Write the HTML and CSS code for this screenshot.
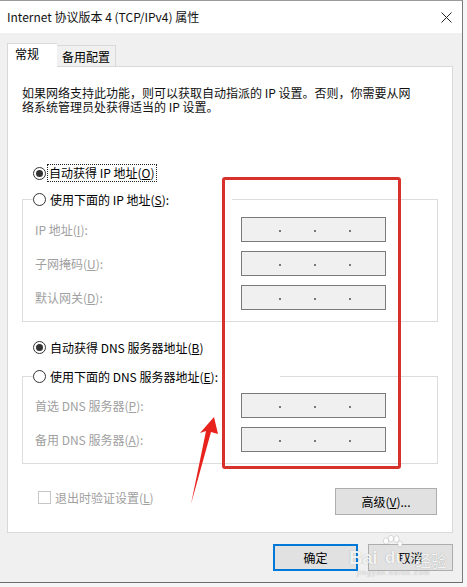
FILE: index.html
```html
<!DOCTYPE html>
<html lang="zh-CN">
<head>
  <meta charset="UTF-8">
  <title>Internet 协议版本 4 (TCP/IPv4) 属性</title>
  <link rel="stylesheet" href="styles.css">
</head>
<body>
  <div class="window">
    <div class="titlebar">
      <span class="title">Internet 协议版本 4 (TCP/IPv4) 属性</span>
      <svg class="close" width="11" height="11" viewBox="0 0 11 11"><path d="M0.5 0.5L10.5 10.5M10.5 0.5L0.5 10.5" stroke="#222" stroke-width="1" fill="none"/></svg>
    </div>

    <div class="content">
      <div class="tabs">
        <div class="tab active">常规</div>
        <div class="tab">备用配置</div>
      </div>

      <div class="panel">
        <p class="desc">如果网络支持此功能，则可以获取自动指派的 IP 设置。否则，你需要从网<br>络系统管理员处获得适当的 IP 设置。</p>

        <div class="radio-row mt-ip">
          <span class="radio checked"></span><span class="focus">自动获得 IP 地址(<u>O</u>)</span>
        </div>
        <fieldset class="group group-ip">
          <legend class="legend-ip"><span class="radio"></span><span>使用下面的 IP 地址(<u>S</u>):</span></legend>
          <div class="fields">
            <label class="lbl">IP 地址(<u>I</u>):</label>
            <div class="ipbox"><i></i><i></i><i></i></div>
            <label class="lbl">子网掩码(<u>U</u>):</label>
            <div class="ipbox"><i></i><i></i><i></i></div>
            <label class="lbl">默认网关(<u>D</u>):</label>
            <div class="ipbox"><i></i><i></i><i></i></div>
          </div>
        </fieldset>

        <div class="radio-row mt-dns">
          <span class="radio checked"></span><span>自动获得 DNS 服务器地址(<u>B</u>)</span>
        </div>
        <fieldset class="group group-dns">
          <legend class="legend-dns"><span class="radio"></span><span>使用下面的 DNS 服务器地址(<u>E</u>):</span></legend>
          <div class="fields">
            <label class="lbl">首选 DNS 服务器(<u>P</u>):</label>
            <div class="ipbox"><i></i><i></i><i></i></div>
            <label class="lbl">备用 DNS 服务器(<u>A</u>):</label>
            <div class="ipbox"><i></i><i></i><i></i></div>
          </div>
        </fieldset>

        <div class="panel-foot">
          <label class="check"><span class="box"></span><span>退出时验证设置(<u>L</u>)</span></label>
          <button class="btn adv">高级(<u>V</u>)...</button>
        </div>
      </div>

      <div class="actions">
        <button class="btn primary">确定</button>
        <button class="btn">取消</button>
      </div>
    </div>

    <!-- annotation drawn over the dialog -->
    <div class="redbox"></div>
    <svg class="arrow" width="40" height="100" viewBox="185 410 40 100">
      <polygon points="214,417 218,434 211,432 191,504 206,431 200,433" fill="#e8231e"/>
    </svg>

    <div class="watermark">
      <span class="wm-bai">Bai</span>
      <svg class="wm-paw" width="22" height="20" viewBox="0 0 22 20">
        <ellipse cx="5" cy="6" rx="2.6" ry="3.2" fill="rgba(255,255,255,.85)" stroke="rgba(0,0,0,.12)"/>
        <ellipse cx="10" cy="3.5" rx="2.6" ry="3.2" fill="rgba(255,255,255,.85)" stroke="rgba(0,0,0,.12)"/>
        <ellipse cx="15.5" cy="4" rx="2.6" ry="3.2" fill="rgba(255,255,255,.85)" stroke="rgba(0,0,0,.12)"/>
        <ellipse cx="19" cy="9" rx="2.4" ry="3" fill="rgba(255,255,255,.85)" stroke="rgba(0,0,0,.12)"/>
      </svg>
      <span class="wm-du">du</span>
      <span class="wm-jy">经验</span>
      <span class="wm-url">jingyan.baidu.com</span>
    </div>
  </div>
</body>
</html>
```

FILE: styles.css
```css
*{margin:0;padding:0;box-sizing:border-box;}
body{background:#f6f6f6;font-family:"Noto Sans CJK SC","Noto Sans",sans-serif;font-size:12px;color:#000;}

.window{position:relative;width:463px;height:583px;background:#f0f0f0;border-top:1px solid #9a9a9a;border-right:1px solid #7a7a7a;border-bottom:1px solid #6e6e6e;}
.titlebar{height:32px;background:#fff;display:flex;align-items:center;justify-content:space-between;padding:0 10px 0 7px;}
.title{font-size:12px;line-height:14px;color:#111;}
.close{display:block;}

.content{padding:10px 9px 0 7px;}
.tabs{display:flex;align-items:flex-end;height:23px;position:relative;z-index:1;}
.tab{height:21px;padding:0 5px;border:1px solid #d9d9d9;border-left:none;border-bottom:none;background:#f0f0f0;line-height:21px;font-size:12px;}
.tab.active{height:24px;width:50px;margin-bottom:-1px;padding:0 0 0 7px;border-left:1px solid #d9d9d9;border-right:none;background:#fff;line-height:19px;}

.panel{height:467px;background:#fff;border:1px solid #d9d9d9;padding:19px 14px 0 14px;}
.desc{line-height:14px;color:#111;}

.radio-row{display:flex;align-items:center;height:18px;padding-left:11px;gap:4px;}
.mt-ip{margin-top:50px;}
.mt-dns{margin-top:16px;}
.radio{display:inline-block;width:13px;height:13px;border:1px solid #333;border-radius:50%;background:#fff;position:relative;flex:none;}
.radio.checked::after{content:"";position:absolute;left:2px;top:2px;width:7px;height:7px;border-radius:50%;background:#333;}
.focus{outline:1px dotted #222;outline-offset:0;padding:0 1px;line-height:16px;margin-left:-2px;}

.group{border:1px solid #dcdcdc;padding:9px 0 11px 12px;}
.group-ip{margin-top:8px;}
.group-dns{margin-top:11px;padding-top:8px;}
legend{display:flex;align-items:center;gap:4px;height:18px;padding:0;margin-left:-2px;}
.legend-ip{width:199px;}
.legend-dns{width:247px;}

.fields{display:grid;grid-template-columns:206px 145px;grid-auto-rows:25px;row-gap:9px;align-items:center;}
.lbl{color:#a0a0a0;}
.ipbox{height:25px;background:#f0f0f0;border:1px solid #7a7a7a;display:flex;align-items:center;gap:33px;padding:3px 0 0 37px;}
.ipbox i{display:block;width:2px;height:2px;background:#777;}

.panel-foot{display:flex;justify-content:space-between;align-items:flex-start;margin-top:24px;padding:0 1px 0 16px;}
.check{display:flex;align-items:center;gap:4px;color:#a0a0a0;margin-top:3px;height:12px;}
.box{width:13px;height:13px;border:1px solid #c6c6c6;background:#fff;flex:none;}

.btn{font-family:inherit;font-size:12px;color:#000;background:#e1e1e1;border:1px solid #adadad;height:27px;width:85px;}
.btn.adv{width:102px;}
.btn.primary{border:2px solid #0078d7;}
.actions{display:flex;justify-content:flex-end;gap:10px;margin-top:11px;}

.redbox{position:absolute;left:222px;top:176px;width:179px;height:292px;border:3px solid #d8312c;border-radius:3px;}
.arrow{position:absolute;left:185px;top:409px;}

.watermark{position:absolute;left:349px;top:532px;width:100px;height:48px;color:rgba(255,255,255,.9);text-shadow:0 0 1px rgba(0,0,0,.35);pointer-events:none;}
.wm-bai{position:absolute;left:0;top:14px;font:bold 19px "Liberation Sans",sans-serif;letter-spacing:-0.5px;}
.wm-paw{position:absolute;left:32px;top:2px;}
.wm-du{position:absolute;left:36px;top:15px;font:bold 17px "Liberation Sans",sans-serif;}
.wm-jy{position:absolute;left:66px;top:15px;font-size:16px;}
.wm-url{position:absolute;left:8px;top:36px;font:7px "Liberation Sans",sans-serif;letter-spacing:1px;color:rgba(255,255,255,.7);}
```
